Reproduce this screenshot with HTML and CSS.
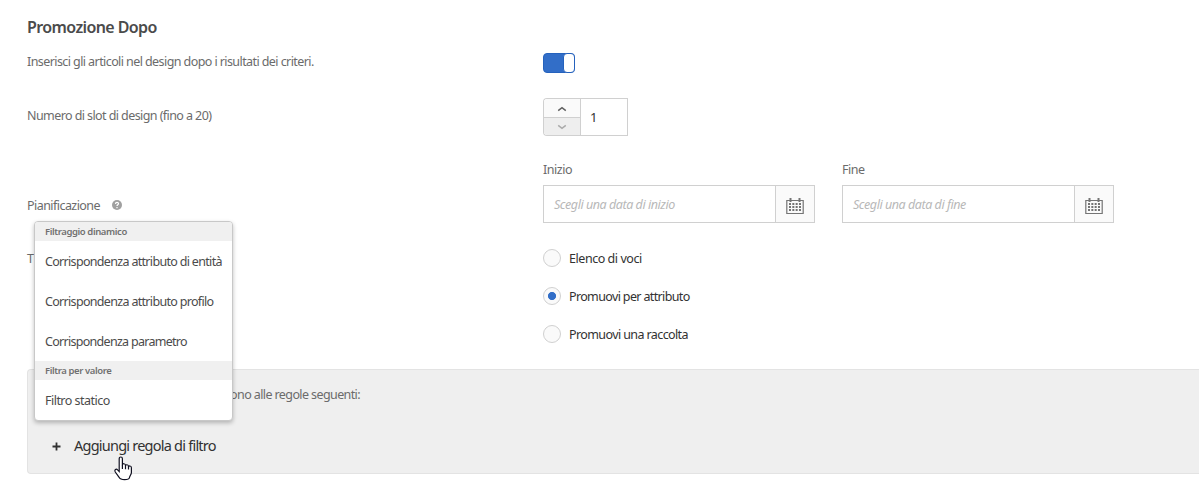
FILE: index.html
```html
<!DOCTYPE html>
<html lang="it">
<head>
<meta charset="utf-8">
<title>Promozione Dopo</title>
<link rel="stylesheet" href="styles.css">
</head>
<body>
<main class="page">
  <h1 class="title"><span>Promozione Dopo</span></h1>
  <section class="form">
    <div class="row row-toggle">
      <div class="label"><span class="t-intro">Inserisci gli articoli nel design dopo i risultati dei criteri.</span></div>
      <div class="toggle"><span class="knob"></span></div>
    </div>
    <div class="row row-slots">
      <div class="label"><span class="t-slots">Numero di slot di design (fino a 20)</span></div>
      <div class="stepper">
        <div class="arrows">
          <span class="arrow"><svg width="10" height="6" viewBox="0 0 10 6"><path d="M1.2 4.7 5 1.6 8.8 4.7"/></svg></span>
          <span class="arrow off"><svg width="10" height="6" viewBox="0 0 10 6"><path d="M1.2 1.3 5 4.4 8.8 1.3"/></svg></span>
        </div>
        <span class="value">1</span>
      </div>
    </div>
    <div class="row row-plan">
      <div class="label"><span class="t-plan">Pianificazione</span>
        <svg class="help" width="10" height="10" viewBox="0 0 10 10"><circle cx="5" cy="5" r="5"/><path d="M3.5 3.9C3.5 1.9 6.6 2 6.5 3.8 6.5 4.8 5 4.8 5 6"/><path d="M5 7v1.2"/></svg>
      </div>
      <div class="dates">
        <div class="date">
          <div class="caption">Inizio</div>
          <div class="field"><span class="hint">Scegli una data di inizio</span><span class="cal"><svg width="18" height="17" viewBox="0 0 18 17"><path class="box" d="M.8 2.5h16.4v13H.8z"/><path class="ring" d="M4.5 0v4M13.5 0v4"/><path class="dots" d="M3 6h12M3 9h12M3 12h12"/></svg></span></div>
        </div>
        <div class="date">
          <div class="caption">Fine</div>
          <div class="field"><span class="hint">Scegli una data di fine</span><span class="cal"><svg width="18" height="17" viewBox="0 0 18 17"><path class="box" d="M.8 2.5h16.4v13H.8z"/><path class="ring" d="M4.5 0v4M13.5 0v4"/><path class="dots" d="M3 6h12M3 9h12M3 12h12"/></svg></span></div>
        </div>
      </div>
    </div>
    <div class="row row-type">
      <div class="label">T</div>
      <div class="radios">
        <div class="radio"><i class="dot"></i><span>Elenco di voci</span></div>
        <div class="radio"><i class="dot on"></i><span class="t-r2">Promuovi per attributo</span></div>
        <div class="radio"><i class="dot"></i><span class="t-r3">Promuovi una raccolta</span></div>
      </div>
    </div>
  </section>
  <section class="panel">
    <div class="rules">ono alle regole seguenti:</div>
    <div class="add"><svg width="9" height="9" viewBox="0 0 9 9"><path d="M4.5.5v8M.5 4.5h8"/></svg><span class="t-add">Aggiungi regola di filtro</span></div>
  </section>
</main>
<div class="menu">
  <div class="group">Filtraggio dinamico</div>
  <div class="item"><span class="t-m1">Corrispondenza attributo di entità</span></div>
  <div class="item"><span class="t-m2">Corrispondenza attributo profilo</span></div>
  <div class="item"><span class="t-m3">Corrispondenza parametro</span></div>
  <div class="group">Filtra per valore</div>
  <div class="item"><span class="t-m4">Filtro statico</span></div>
</div>
<svg class="cursor" width="19" height="25" viewBox="0 0 19 25"><path d="M5.2 15.6V2.8C5.2.4 8.4.4 8.4 2.8v6.4c0-2.1 3.1-1.9 3.1.2v.6c0-1.8 3-1.6 3 .4v.8c.1-1.8 2.9-1.6 2.9.5v4.8c0 2-1.6 3.1-1.9 5-.3 1.5-2 2.2-4.9 2.2-3 0-4.7-.7-5.5-2.4L1.3 16c-1.2-2.3.9-3.7 2.3-2.1z"/><path class="lines" d="M8.4 9v4M11.5 9.8v3.5M14.5 10.6v3"/></svg>
</body>
</html>
```
FILE: styles.css
```css
* { box-sizing: border-box; }
body {
  margin: 0;
  width: 1199px;
  height: 494px;
  overflow: hidden;
  position: relative;
  background: #fff;
  color: #6b6b6b;
  font: 12.5px/18px "Noto Sans", "Open Sans", sans-serif;
  letter-spacing: -0.45px;
  white-space: nowrap;
}
svg { display: block; fill: none; }
.page { padding: 17px 0 0 27px; }
.title { margin: 0; height: 36px; font-size: 16px; line-height: 20px; font-weight: 600; color: #4b4b4b; letter-spacing: -0.6px; }
.t-intro, .t-slots { letter-spacing: -.58px; }
.t-plan { letter-spacing: -.55px; }
.t-r2 { letter-spacing: -.64px; }
.t-r3 { letter-spacing: -.6px; }
.t-m1, .t-m2 { letter-spacing: -.68px; }
.t-m3 { letter-spacing: -.71px; }
.t-m4 { letter-spacing: -.52px; }
.t-add { letter-spacing: -.77px; }
.row { display: grid; grid-template-columns: 516px 1fr; }
.row-toggle { height: 45px; }
.toggle { display: flex; justify-content: flex-end; width: 32px; height: 20px; background: #326ec8; border: 1px solid #2562bd; border-radius: 4px; }
.knob { width: 12px; height: 20px; margin: -1px; background: #fff; border: 1px solid #2562bd; border-radius: 4px; }
.row-slots { height: 63px; }
.row-slots .label { padding-top: 9px; }
.stepper { display: flex; width: 85px; height: 38px; }
.arrows { width: 37px; display: flex; flex-direction: column; border: 1px solid #d0d0d0; border-right: 0; border-radius: 4px 0 0 4px; overflow: hidden; }
.arrow { flex: 1; display: grid; place-items: center; background: #fafafa; padding-top: 2px; }
.arrow path { stroke: #606060; stroke-width: 1.5; }
.arrow.off { background: #eee; border-top: 1px solid #d0d0d0; }
.arrow.off path { stroke: #aaa; }
.value { flex: 1; border: 1px solid #d0d0d0; padding-left: 9px; line-height: 37px; color: #323232; font-size: 13px; }
.row-plan { height: 88px; }
.row-plan .label { display: flex; padding-top: 36px; height: 54px; }
.help { margin: 3px 0 0 12px; }
.help circle { fill: #a0a0a0; }
.help path { stroke: #fff; stroke-width: 1.2; }
.dates { display: flex; gap: 27px; }
.date { width: 272px; }
.caption { height: 24px; }
.field { display: flex; height: 38px; border: 1px solid #d0d0d0; }
.hint { flex: 1; padding-left: 10px; line-height: 37px; font-style: italic; color: #b8b8b8; }
.cal { width: 39px; border-left: 1px solid #d0d0d0; background: #fafafa; display: grid; place-items: center; padding-top: 4px; }
.cal path { stroke: #747474; }
.cal .box { stroke-width: 1.2; }
.cal .ring { stroke-width: 2; }
.cal .dots { stroke-width: 2; stroke-dasharray: 2 1.33; }
.row-type { height: 120px; }
.row-type .label { padding-top: 1px; }
.radios { display: flex; flex-direction: column; gap: 20px; color: #323232; }
.radio { display: flex; height: 18px; gap: 8px; line-height: 20px; }
.dot { width: 18px; height: 18px; border: 1px solid #d0d0d0; border-radius: 50%; background: #fafafa; }
.dot.on { background: radial-gradient(circle, #326ec8 3.7px, #fafafa 4.4px); }
.panel { height: 105px; border: 1px solid #e3e3e3; border-right: 0; border-radius: 4px 0 0 4px; background: #efefef; padding: 16px 0 0 24px; }
.rules { width: 308px; height: 49px; display: flex; justify-content: flex-end; letter-spacing: -.6px; }
.add { display: flex; align-items: center; gap: 13px; height: 20px; color: #323232; font-size: 14.5px; }
.add svg { position: relative; top: 1px; }
.add path { stroke: #323232; stroke-width: 1.8; }
.menu { position: absolute; left: 34px; top: 221px; width: 199px; height: 200px; border: 1px solid #c8c8c8; border-radius: 4px; background: #fff; box-shadow: 0 2px 4px rgba(0,0,0,.25); overflow: hidden; color: #4b4b4b; }
.group { height: 19px; padding-left: 10px; line-height: 19px; background: #f0f0f0; color: #707070; font-size: 9.5px; font-weight: 600; letter-spacing: -.4px; }
.item { height: 40px; padding-left: 10px; line-height: 42px; }
.cursor { position: absolute; left: 114px; top: 456px; }
.cursor path { fill: #fff; stroke: #101020; stroke-width: 1.2; }
.cursor .lines { fill: none; }
```
